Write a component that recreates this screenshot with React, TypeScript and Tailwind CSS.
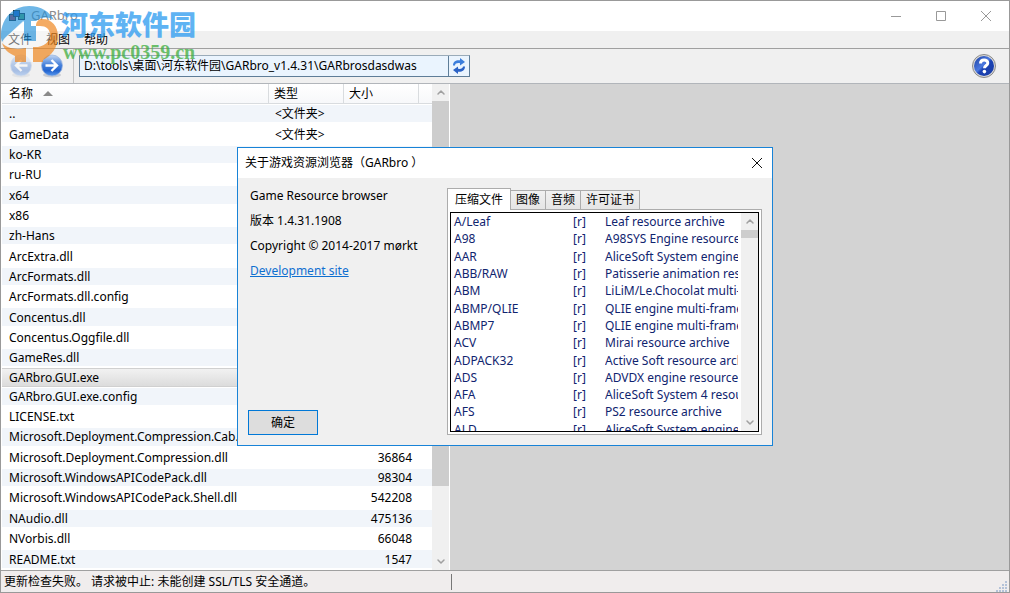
import React, { useState } from "react";
import { ChevronDown, ChevronUp } from "lucide-react";

type FileRow = { name: string; type?: string; size?: string };

const files: FileRow[] = [
  { name: "..", type: "<文件夹>" },
  { name: "GameData", type: "<文件夹>" },
  { name: "ko-KR" },
  { name: "ru-RU" },
  { name: "x64" },
  { name: "x86" },
  { name: "zh-Hans" },
  { name: "ArcExtra.dll" },
  { name: "ArcFormats.dll" },
  { name: "ArcFormats.dll.config" },
  { name: "Concentus.dll" },
  { name: "Concentus.Oggfile.dll" },
  { name: "GameRes.dll" },
  { name: "GARbro.GUI.exe" },
  { name: "GARbro.GUI.exe.config" },
  { name: "LICENSE.txt" },
  { name: "Microsoft.Deployment.Compression.Cab.dll" },
  { name: "Microsoft.Deployment.Compression.dll", size: "36864" },
  { name: "Microsoft.WindowsAPICodePack.dll", size: "98304" },
  { name: "Microsoft.WindowsAPICodePack.Shell.dll", size: "542208" },
  { name: "NAudio.dll", size: "475136" },
  { name: "NVorbis.dll", size: "66048" },
  { name: "README.txt", size: "1547" },
];

const formats = [
  ["A/Leaf", "Leaf resource archive"],
  ["A98", "A98SYS Engine resource archive"],
  ["AAR", "AliceSoft System engine resource archive"],
  ["ABB/RAW", "Patisserie animation resource"],
  ["ABM", "LiLiM/Le.Chocolat multi-frame archive"],
  ["ABMP/QLIE", "QLIE engine multi-frame archive"],
  ["ABMP7", "QLIE engine multi-frame archive"],
  ["ACV", "Mirai resource archive"],
  ["ADPACK32", "Active Soft resource archive"],
  ["ADS", "ADVDX engine resource archive"],
  ["AFA", "AliceSoft System 4 resource archive"],
  ["AFS", "PS2 resource archive"],
  ["ALD", "AliceSoft System engine resource archive"],
];

const tabs = ["压缩文件", "图像", "音频", "许可证书"];

function AppIcon() {
  return (
    <svg viewBox="0 0 16 12" className="h-3 w-4" aria-hidden="true">
      <rect x="0.5" y="4.5" width="6" height="6" fill="#b8303c" stroke="#222" />
      <rect x="9.5" y="3.5" width="6" height="6" fill="#4fa35a" stroke="#222" />
      <rect x="4.5" y="0.5" width="6" height="6" fill="#1f4fb0" stroke="#222" />
    </svg>
  );
}

function TitleBar() {
  return (
    <header className="flex h-[30px] shrink-0 items-center bg-white pl-2">
      <AppIcon />
      <h1 className="flex-1 pl-[6px] text-[13px] text-[#8c8c8c]">GARbro</h1>
      <button aria-label="最小化" className="flex h-full w-[45px] items-center justify-center">
        <svg viewBox="0 0 10 10" className="h-[10px] w-[10px]"><path d="M0 5.5h10" stroke="#999" /></svg>
      </button>
      <button aria-label="最大化" className="flex h-full w-[45px] items-center justify-center">
        <svg viewBox="0 0 10 10" className="h-[10px] w-[10px]"><path d="M.5.5h9v9h-9z" fill="none" stroke="#999" /></svg>
      </button>
      <button aria-label="关闭" className="flex h-full w-[46px] items-center justify-center">
        <svg viewBox="0 0 10 10" className="h-[10px] w-[10px]"><path d="M0 0l10 10M10 0L0 10" stroke="#999" /></svg>
      </button>
    </header>
  );
}

function ArrowButton({ label, disabled, flip }: { label: string; disabled?: boolean; flip?: boolean }) {
  return (
    <button aria-label={label} disabled={disabled} className="h-6 w-6 disabled:opacity-35">
      <svg viewBox="0 0 24 24" className={flip ? "h-6 w-6 -scale-x-100" : "h-6 w-6"}>
        <defs>
          <linearGradient id={flip ? "arrowBack" : "arrowNext"} x1="0" y1="0" x2="0" y2="1">
            <stop offset="0" stopColor="#c3d6f2" />
            <stop offset="0.45" stopColor="#4a84dc" />
            <stop offset="0.75" stopColor="#2364cf" />
            <stop offset="1" stopColor="#5c9bee" />
          </linearGradient>
        </defs>
        <ellipse cx="12" cy="21" rx="9" ry="2.5" fill="#c9ccd2" />
        <circle cx="12" cy="11.5" r="10.5" fill={flip ? "url(#arrowBack)" : "url(#arrowNext)"} stroke="#9db6de" strokeWidth="0.8" />
        <path d="M5.5 11.5h11M11.5 6l5.5 5.5-5.5 5.5" fill="none" stroke="#fff" strokeWidth="2.4" />
      </svg>
    </button>
  );
}

function Toolbar() {
  const [path, setPath] = useState("D:\\tools\\桌面\\河东软件园\\GARbro_v1.4.31\\GARbrosdasdwas");
  return (
    <div className="flex h-[35px] shrink-0 items-center border-b border-[#b1b5ba] bg-[#f0f0f0] pr-3">
      <div className="flex h-full w-[73px] items-center gap-[7px] border-r border-[#c4c4c4] pl-2">
        <ArrowButton label="后退" disabled flip />
        <ArrowButton label="前进" />
      </div>
      <div className="ml-[5px] flex h-[22px] w-[391px] border border-[#5e7d98] border-t-[#9aabb9] bg-[#eaf4fe]">
        <input
          aria-label="路径"
          value={path}
          onChange={(e) => setPath(e.target.value)}
          className="min-w-0 flex-1 bg-transparent px-1 outline-none"
        />
        <button aria-label="刷新" className="flex w-[21px] items-center justify-center border-l border-[#5e7d98]">
          <svg viewBox="0 0 16 16" className="h-4 w-4">
            <path d="M2 7.500C2 3.500 5 1.800 9 2.200V0l5 4-5 3.500V5.200C6 4.800 4.200 5.500 4 7.500z" fill="#3b7ddb" />
            <path d="M14 8.500c0 4-3 5.700-7 5.300V16l-5-4 5-3.500v2.300c3 .4 4.800-.3 5-2.300z" fill="#2a62c6" />
          </svg>
        </button>
      </div>
      <button aria-label="帮助" className="ml-auto h-[26px] w-[26px]">
        <svg viewBox="0 0 26 26" className="h-[26px] w-[26px]">
          <defs>
            <linearGradient id="help" x1="0" y1="0" x2="1" y2="1">
              <stop offset="0" stopColor="#1b3f9e" />
              <stop offset="0.45" stopColor="#4a78e0" />
              <stop offset="0.55" stopColor="#1c43b4" />
              <stop offset="1" stopColor="#1a3ca4" />
            </linearGradient>
          </defs>
          <circle cx="13" cy="13" r="11.5" fill="#d8d8d8" stroke="#8a8a8a" />
          <circle cx="13" cy="13" r="10" fill="url(#help)" />
          <path d="M9.500 10.500c0-4.800 7.300-4.500 7.300-.6 0 2.600-3.300 2.600-3.300 5.300" fill="none" stroke="#fff" strokeWidth="3" />
          <circle cx="13.4" cy="18.6" r="1.8" fill="#fff" />
        </svg>
      </button>
    </div>
  );
}

function FileList() {
  return (
    <section className="flex w-[449px] shrink-0 border-r border-white bg-white pl-px">
      <table className="h-full w-[430px] table-fixed border-separate border-spacing-0 text-left leading-[14px]">
        <colgroup>
          <col className="w-[267px]" />
          <col className="w-[75px]" />
          <col className="w-[75px]" />
          <col />
        </colgroup>
        <thead>
          <tr className="h-5">
            <th className="border-r border-b border-[#d9dcdf] bg-linear-to-b from-white to-[#f7f8fa] pl-[7px] font-normal">
              <span className="flex items-center gap-[10px]">
                名称
                <svg viewBox="0 0 10 5" className="h-[5px] w-[10px]"><path d="M0 5L5 0l5 5z" fill="#8a8a8a" /></svg>
              </span>
            </th>
            <th className="border-r border-b border-[#d9dcdf] bg-linear-to-b from-white to-[#f7f8fa] pl-[5px] font-normal">类型</th>
            <th className="border-r border-b border-[#d9dcdf] bg-linear-to-b from-white to-[#f7f8fa] pl-[5px] font-normal">大小</th>
            <th className="border-b border-[#d9dcdf] bg-linear-to-b from-white to-[#f7f8fa]" />
          </tr>
        </thead>
        <tbody>
          {files.map((file) => (
            <tr
              key={file.name}
              className={
                file.name === "GARbro.GUI.exe"
                  ? "bg-linear-to-b from-[#f3f3f3] to-[#dcdcdc] [&>td]:border-y [&>td]:border-[#d0d0d0]"
                  : "odd:bg-[#f1f5fa] [&>td]:border-t [&>td]:border-b-2 [&>td]:border-white [&>td]:pt-px"
              }
            >
              <td className="overflow-hidden pl-[7px] whitespace-nowrap">{file.name}</td>
              <td className="pl-[6px] whitespace-nowrap">{file.type}</td>
              <td className="pr-[7px] text-right">{file.size}</td>
              <td />
            </tr>
          ))}
        </tbody>
      </table>
      <div className="ml-auto flex w-[17px] flex-col items-center bg-[#f0f0f0] text-[#a0a0a0]">
        <ChevronUp strokeWidth={3} className="h-[17px] w-3 shrink-0" />
        <div className="w-full flex-[385] bg-[#cdcdcd]" />
        <div className="flex-[67]" />
        <ChevronDown strokeWidth={3} className="h-[17px] w-3 shrink-0" />
      </div>
    </section>
  );
}

function AboutDialog({ onClose }: { onClose: () => void }) {
  const [active, setActive] = useState(0);
  return (
    <div className="absolute inset-0 flex items-center justify-center">
      <div role="dialog" aria-labelledby="about-title" className="flex w-[536px] flex-col border border-[#1883d7] bg-[#f0f0f0]">
        <div className="flex h-[30px] items-center bg-white pl-[7px]">
          <h2 id="about-title" className="flex-1">关于游戏资源浏览器（GARbro ）</h2>
          <button aria-label="关闭" onClick={onClose} className="flex h-full w-[30px] items-center justify-center">
            <svg viewBox="0 0 10 10" className="h-[10px] w-[10px]"><path d="M0 0l10 10M10 0L0 10" stroke="#111" /></svg>
          </button>
        </div>
        <div className="flex h-[267px] justify-between p-[10px]">
          <div className="flex flex-col items-start">
            <div className="flex flex-col gap-[9px] pl-[2px]">
              <p>Game Resource browser</p>
              <p>版本 1.4.31.1908</p>
              <p>Copyright © 2014-2017 mørkt</p>
              <a href="#site" className="text-[#0f6fd0] underline">Development site</a>
            </div>
            <button onClick={onClose} className="mt-auto h-[25px] w-[70px] border border-[#0078d7] bg-[#ddd]">确定</button>
          </div>
          <div className="flex w-[315px] flex-col">
            <div role="tablist" className="flex items-end">
              {tabs.map((tab, i) => (
                <button
                  key={tab}
                  role="tab"
                  aria-selected={i === active}
                  onClick={() => setActive(i)}
                  className={
                    i === active
                      ? "relative -mb-px h-[22px] border border-b-0 border-[#acacac] bg-white px-[7px]"
                      : "h-[19px] border border-b-0 border-l-0 border-[#acacac] bg-linear-to-b from-[#f0f0f0] to-[#e5e5e5] px-[5px]"
                  }
                >
                  {tab}
                </button>
              ))}
            </div>
            <div role="tabpanel" className="min-h-0 flex-1 border border-[#acacac] bg-white p-[2px]">
              <div className="flex h-full overflow-hidden border border-black">
                <div className="min-w-0 flex-1 overflow-hidden pr-[3px]">
                  <table className="h-[225px] w-full table-fixed border-collapse leading-[14px] text-[#10246f]">
                    <colgroup>
                      <col className="w-[122px]" />
                      <col className="w-8" />
                      <col />
                    </colgroup>
                    <tbody>
                      {formats.map(([tag, description]) => (
                        <tr key={tag}>
                          <td className="pt-px pl-[3px]">{tag}</td>
                          <td className="pt-px">[r]</td>
                          <td className="overflow-hidden pt-px whitespace-nowrap">{description}</td>
                        </tr>
                      ))}
                    </tbody>
                  </table>
                </div>
                <div className="flex w-[17px] flex-col items-center bg-[#f0f0f0] text-[#a0a0a0]">
                  <ChevronUp strokeWidth={3} className="h-[17px] w-3 shrink-0" />
                  <div className="h-2 w-full shrink-0 bg-[#cdcdcd]" />
                  <ChevronDown strokeWidth={3} className="mt-auto h-[17px] w-3 shrink-0" />
                </div>
              </div>
            </div>
          </div>
        </div>
      </div>
    </div>
  );
}

// site stamp laid over the window's top left corner
function Watermark() {
  return (
    <div className="pointer-events-none absolute top-0 left-0 flex opacity-75">
      <svg viewBox="0 0 60 64" className="h-16 w-[60px]">
        <path d="M0 37C-1 18 12 5 28 5c12 0 21 6 25 14-4-3-9-3-13-2l-5 3h-5v5h5v15h-12V20L5 36c-2 2-3 3-4 5z" fill="#1f8fda" fillOpacity="0.85" />
        <path d="M22 20L5 36c-4 5-2 9 4 11 5 1 10 1 16 0v14h7V46h5c8-2 12-6 12-12s-4-9-10-9h-4v15H23z" fill="#fff" fillOpacity="0.6" />
        <path d="M40 18c10-1 17 7 17 17 0 12-7 20-15 24v2H32V46h5c8-2 12-6 12-12s-4-9-10-9h-4c0-4 2-6 5-7z" fill="#f08418" fillOpacity="0.9" />
        <path d="M1 42c6 6 15 7 24 5v14H14v-6C7 52 3 48 1 42z" fill="#f08418" fillOpacity="0.9" />
      </svg>
      <div className="pt-2">
        <p className="text-[27px] leading-[32px] font-black text-[#2a9af0]">河东软件园</p>
        <p className="pl-0.5 font-['Liberation_Serif',serif] text-xl leading-[22px] font-bold text-[#3fae3f]">www.pc0359.cn</p>
      </div>
    </div>
  );
}

export default function App() {
  const [aboutOpen, setAboutOpen] = useState(true);
  return (
    <div className="relative flex h-screen flex-col border border-[#999] bg-[#f0f0f0] font-['Noto_Sans','Noto_Sans_CJK_SC',sans-serif] text-xs text-black">
      <TitleBar />
      <nav className="flex h-[18px] shrink-0 items-center gap-[14px] border-b border-[#a0a0a0] pl-[7px]">
        <button>文件</button>
        <button>视图</button>
        <button onClick={() => setAboutOpen(true)}>帮助</button>
      </nav>
      <Toolbar />
      <main className="flex min-h-0 flex-1">
        <FileList />
        <div className="flex-1 bg-[#d3d3d3]" />
      </main>
      <footer className="flex h-[22px] shrink-0 items-center border-t border-[#a0a0a0] bg-[#f0eded]">
        <p className="w-[451px] border-r border-[#777] pl-[3px]">更新检查失败。 请求被中止: 未能创建 SSL/TLS 安全通道。</p>
        <svg viewBox="0 0 11 11" className="mt-auto mr-[2px] ml-auto h-[11px] w-[11px]" fill="#b4c2d8" aria-hidden="true">
          <path d="M9 0h2v2H9zM9 3h2v2H9zM6 3h2v2H6zM9 6h2v2H9zM6 6h2v2H6zM3 6h2v2H3zM9 9h2v2H9zM6 9h2v2H6zM3 9h2v2H3zM0 9h2v2H0z" />
        </svg>
      </footer>
      {aboutOpen && <AboutDialog onClose={() => setAboutOpen(false)} />}
      <Watermark />
    </div>
  );
}
